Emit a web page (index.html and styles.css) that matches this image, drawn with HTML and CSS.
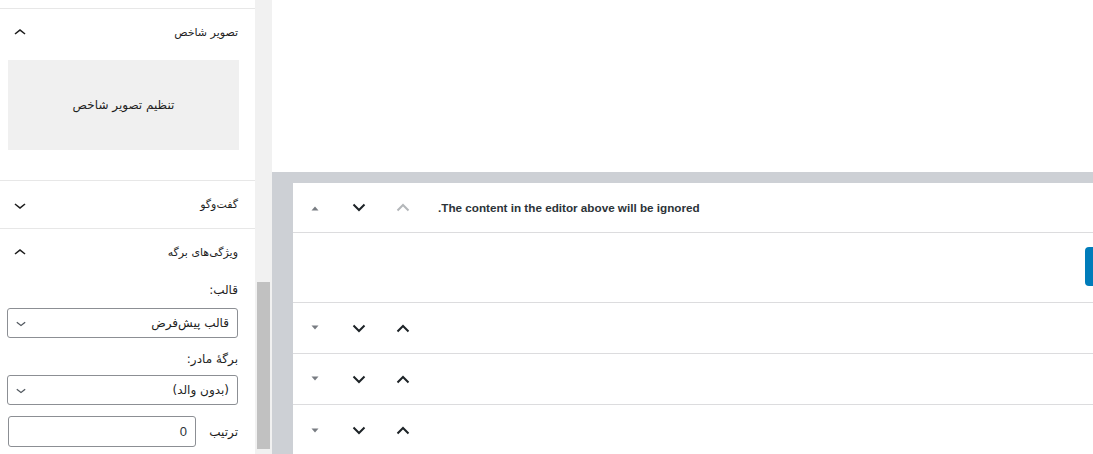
FILE: index.html
```html
<!DOCTYPE html>
<html lang="fa">
<head>
<meta charset="utf-8">
<title>Editor</title>
<link rel="stylesheet" href="styles.css">
</head>
<body>
<div class="app">
  <aside class="sidebar" dir="rtl">
    <div class="panel panel-top"></div>
    <section class="panel">
      <div class="panel-head">
        <span class="panel-title">تصویر شاخص</span>
        <svg class="toggle" width="24" height="24" viewBox="0 0 24 24"><path d="M6.5 12.4L12 8l5.5 4.4-.9 1.2L12 10l-4.5 3.6-1-1.2z"/></svg>
      </div>
      <div class="panel-body featured">
        <div class="featured-box">تنظیم تصویر شاخص</div>
      </div>
    </section>
    <section class="panel">
      <div class="panel-head">
        <span class="panel-title">گفت‌وگو</span>
        <svg class="toggle" width="24" height="24" viewBox="0 0 24 24"><path d="M17.5 11.6L12 16l-5.5-4.4.9-1.2L12 14l4.5-3.6 1 1.2z"/></svg>
      </div>
    </section>
    <section class="panel panel-last">
      <div class="panel-head">
        <span class="panel-title">ویژگی‌های برگه</span>
        <svg class="toggle" width="24" height="24" viewBox="0 0 24 24"><path d="M6.5 12.4L12 8l5.5 4.4-.9 1.2L12 10l-4.5 3.6-1-1.2z"/></svg>
      </div>
      <div class="panel-body attrs">
        <label class="field-label">قالب:</label>
        <div class="select">
          <span>قالب پیش‌فرض</span>
          <svg width="20" height="20" viewBox="0 0 24 24"><path d="M17.5 11.6L12 16l-5.5-4.4.9-1.2L12 14l4.5-3.6 1 1.2z"/></svg>
        </div>
        <label class="field-label second">برگهٔ مادر:</label>
        <div class="select">
          <span>(بدون والد)</span>
          <svg width="20" height="20" viewBox="0 0 24 24"><path d="M17.5 11.6L12 16l-5.5-4.4.9-1.2L12 14l4.5-3.6 1 1.2z"/></svg>
        </div>
        <div class="order-row">
          <label class="order-label">ترتیب</label>
          <div class="order-input">0</div>
        </div>
      </div>
    </section>
  </aside>
  <div class="scrollbar"><div class="thumb"></div></div>
  <main class="main">
    <div class="canvas"></div>
    <div class="well">
      <div class="metaboxes">
        <div class="mb-head first">
          <div class="actions">
            <span class="act"><svg width="10" height="6" viewBox="0 0 10 6"><path d="M1.5 5.5L5 1.5 8.5 5.5z" fill="#787c82"/></svg></span>
            <span class="act"><svg width="14" height="9" viewBox="0 0 14 9"><polyline points="1.5,1.5 7,7 12.5,1.5" fill="none" stroke="#1d2327" stroke-width="2"/></svg></span>
            <span class="act"><svg width="14" height="9" viewBox="0 0 14 9"><polyline points="1.5,7.5 7,2 12.5,7.5" fill="none" stroke="#b4b7ba" stroke-width="2"/></svg></span>
          </div>
          <div class="mb-title">.The content in the editor above will be ignored</div>
        </div>
        <div class="mb-body">
          <span class="blue-btn"></span>
        </div>
        <div class="mb-head">
          <div class="actions">
            <span class="act"><svg width="10" height="6" viewBox="0 0 10 6"><path d="M1.5 0.5L5 4.5 8.5 0.5z" fill="#787c82"/></svg></span>
            <span class="act"><svg width="14" height="9" viewBox="0 0 14 9"><polyline points="1.5,1.5 7,7 12.5,1.5" fill="none" stroke="#1d2327" stroke-width="2"/></svg></span>
            <span class="act"><svg width="14" height="9" viewBox="0 0 14 9"><polyline points="1.5,7.5 7,2 12.5,7.5" fill="none" stroke="#1d2327" stroke-width="2"/></svg></span>
          </div>
          <div class="mb-title"></div>
        </div>
        <div class="mb-head">
          <div class="actions">
            <span class="act"><svg width="10" height="6" viewBox="0 0 10 6"><path d="M1.5 0.5L5 4.5 8.5 0.5z" fill="#787c82"/></svg></span>
            <span class="act"><svg width="14" height="9" viewBox="0 0 14 9"><polyline points="1.5,1.5 7,7 12.5,1.5" fill="none" stroke="#1d2327" stroke-width="2"/></svg></span>
            <span class="act"><svg width="14" height="9" viewBox="0 0 14 9"><polyline points="1.5,7.5 7,2 12.5,7.5" fill="none" stroke="#1d2327" stroke-width="2"/></svg></span>
          </div>
          <div class="mb-title"></div>
        </div>
        <div class="mb-head last">
          <div class="actions">
            <span class="act"><svg width="10" height="6" viewBox="0 0 10 6"><path d="M1.5 0.5L5 4.5 8.5 0.5z" fill="#787c82"/></svg></span>
            <span class="act"><svg width="14" height="9" viewBox="0 0 14 9"><polyline points="1.5,1.5 7,7 12.5,1.5" fill="none" stroke="#1d2327" stroke-width="2"/></svg></span>
            <span class="act"><svg width="14" height="9" viewBox="0 0 14 9"><polyline points="1.5,7.5 7,2 12.5,7.5" fill="none" stroke="#1d2327" stroke-width="2"/></svg></span>
          </div>
          <div class="mb-title"></div>
        </div>
      </div>
    </div>
  </main>
</div>
</body>
</html>
```

FILE: styles.css
```css
* { box-sizing: border-box; }
html, body { margin: 0; padding: 0; }
body {
  width: 1093px;
  height: 454px;
  overflow: hidden;
  background: #fff;
  font-family: "DejaVu Sans", "Liberation Sans", sans-serif;
  color: #1e1e1e;
}
.app {
  display: flex;
  height: 454px;
}
.sidebar {
  width: 255px;
  flex: none;
  background: #fff;
  display: flex;
  flex-direction: column;
}
.panel {
  border-bottom: 1px solid #e7e7e7;
}
.panel-top { height: 9px; }
.panel-last { border-bottom: none; }
.panel-head {
  height: 47px;
  display: flex;
  align-items: center;
  justify-content: space-between;
  padding: 0 17px 0 8px;
}
.panel-title {
  font-size: 11px;
  color: #1e1e1e;
}
.toggle { fill: #1e1e1e; }
.panel-body.featured {
  padding: 4px 16px 30px 8px;
}
.featured-box {
  height: 90px;
  background: #f0f0f0;
  display: flex;
  align-items: center;
  justify-content: center;
  font-size: 12px;
  color: #1e1e1e;
}
.attrs {
  padding: 2px 17px 0 7px;
  display: flex;
  flex-direction: column;
}
.field-label {
  font-size: 12px;
  line-height: 18px;
  margin: 3px 0 9px;
  color: #1e1e1e;
}
.field-label.second { margin-top: 12px; margin-bottom: 7px; }
.select {
  height: 30px;
  border: 1px solid #8c8f94;
  border-radius: 3px;
  display: flex;
  align-items: center;
  justify-content: space-between;
  padding: 0 8px 0 3px;
  font-size: 12px;
  color: #1e1e1e;
}
.select svg { fill: #50575e; }
.order-row {
  display: flex;
  align-items: center;
  margin-top: 11px;
}
.order-label {
  font-size: 12px;
  width: 42px;
  color: #1e1e1e;
}
.order-input {
  width: 188px;
  height: 31px;
  border: 1px solid #8c8f94;
  border-radius: 3px;
  display: flex;
  align-items: center;
  padding: 0 8px;
  font-family: "Liberation Sans", sans-serif;
  font-size: 13px;
  color: #2c3338;
}
.scrollbar {
  width: 17px;
  flex: none;
  background: #f1f1f1;
  padding: 282px 2px 5px 2px;
}
.thumb {
  height: 167px;
  background: #c1c1c1;
}
.main {
  flex: 1;
  display: flex;
  flex-direction: column;
  min-width: 0;
}
.canvas {
  height: 172px;
  background: #fff;
  flex: none;
}
.well {
  flex: 1;
  background: #cdd0d5;
  padding: 11px 0 0 21px;
}
.metaboxes {
  background: #fff;
  height: 100%;
}
.mb-head {
  display: flex;
  height: 51px;
  border-bottom: 1px solid #dcdcde;
}
.mb-head.first { height: 50px; }
.mb-head.last { border-bottom: none; }
.actions {
  width: 132px;
  display: flex;
  flex: none;
}
.act {
  width: 44px;
  display: flex;
  align-items: center;
  justify-content: center;
}
.mb-title {
  flex: 1;
  display: flex;
  align-items: center;
  padding-left: 13px;
  font-family: "Liberation Sans", Arial, sans-serif;
  font-size: 11.7px;
  font-weight: 700;
  color: #2c3338;
}
.mb-body {
  height: 70px;
  border-bottom: 1px solid #dcdcde;
  display: flex;
  justify-content: flex-end;
  padding-top: 14px;
}
.blue-btn {
  width: 8px;
  height: 39px;
  background: #007cba;
  border-radius: 4px 0 0 4px;
}
```
